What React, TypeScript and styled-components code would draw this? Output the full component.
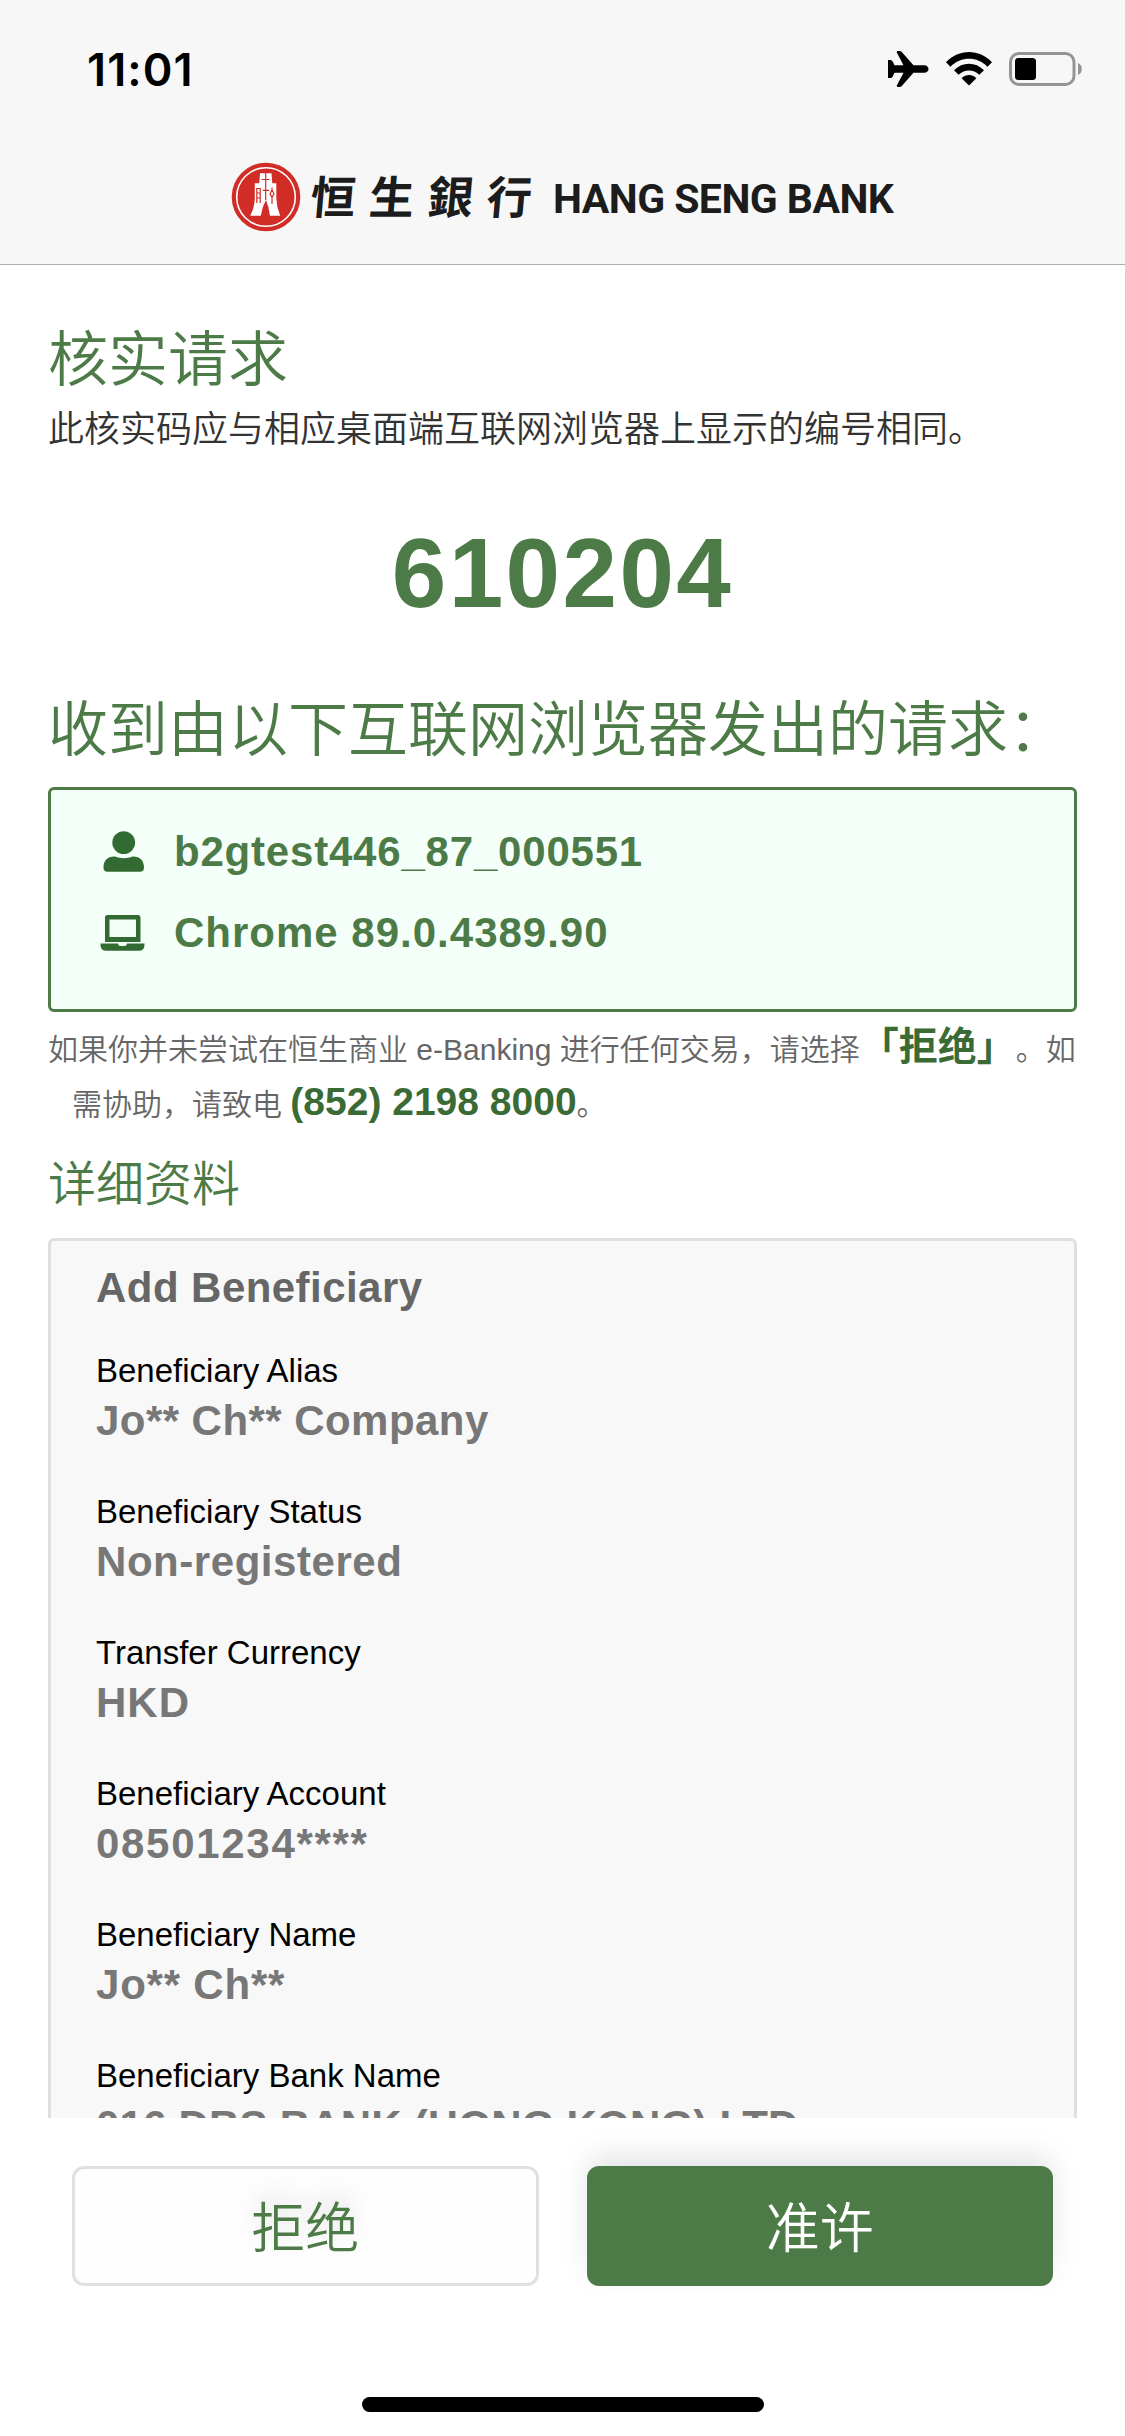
import React from "react";
import styled, { createGlobalStyle } from "styled-components";

const GREEN = "#4d7b47";
const latin = `"Liberation Sans", "Noto Sans CJK SC", sans-serif`;
const cjk = `"Noto Sans CJK SC", "Liberation Sans", sans-serif`;

const GlobalStyle = createGlobalStyle`
  *, *::before, *::after { box-sizing: border-box; }
  body { margin: 0; background: #fff; }
`;

const Screen = styled.div`
  width: 1125px;
  height: 2436px;
  display: flex;
  flex-direction: column;
  overflow: hidden;
  background: #fff;
  font-family: ${latin};
`;

const Header = styled.header`
  flex: none;
  height: 265px;
  display: flex;
  flex-direction: column;
  background: #f7f7f7;
  border-bottom: 1px solid #adadad;
`;

const StatusBar = styled.div`
  height: 132px;
  padding: 6px 42px 0 87px;
  display: flex;
  align-items: center;
  justify-content: space-between;
`;

const Clock = styled.span`
  font: 600 45px/1 Inter, sans-serif;
  letter-spacing: 1.1px;
  color: #000;
`;

const StatusIcons = styled.div`
  display: flex;
  align-items: center;
`;

const Brand = styled.div`
  height: 130px;
  padding-left: 231px;
  display: flex;
  align-items: center;
`;

const BrandHan = styled.span`
  margin: 0 0 5px 10px;
  width: 242px;
  font: 700 45px/62px "Noto Sans CJK TC", sans-serif;
  letter-spacing: 13.7px;
  color: #1c1c1c;
  white-space: nowrap;
  transform: skewX(-5deg);
`;

const BrandLatin = styled.span`
  margin-top: 5px;
  font: 700 41px/69px Roboto, sans-serif;
  letter-spacing: -0.55px;
  color: #1c1c1c;
  white-space: nowrap;
`;

const Main = styled.main`
  flex: none;
  height: 1853px;
  overflow: hidden;
  padding: 0 48px;
`;

const Title = styled.h1<{ $top: number; $size?: number }>`
  margin: ${(p) => p.$top}px 0 0;
  font: 350 ${(p) => p.$size ?? 60}px/72px ${cjk};
  color: ${GREEN};
  white-space: nowrap;
`;

const Intro = styled.p`
  margin: 11px 0 0;
  font: 350 36px/48px ${cjk};
  color: #333;
  white-space: nowrap;
`;

const Code = styled.div`
  margin-top: 73px;
  font: 700 98px/100px ${latin};
  letter-spacing: 2.4px;
  text-align: center;
  color: ${GREEN};
`;

const DeviceCard = styled.section`
  margin-top: 26px;
  height: 225px;
  padding: 21px 49px;
  border: 3px solid ${GREEN};
  border-radius: 6px;
  background: #f5fff9;
`;

const DeviceRow = styled.div`
  height: 81px;
  display: flex;
  align-items: center;
  gap: 29px;
`;

const Strong = styled.span<{ $color: string; $track?: number }>`
  font: 700 42px/50px ${latin};
  letter-spacing: ${(p) => p.$track ?? 1}px;
  color: ${(p) => p.$color};
  white-space: nowrap;
`;

const Notice = styled.div`
  margin-top: 10px;
`;

const NoticeLine = styled.p<{ $indent?: number }>`
  margin: 0;
  padding-left: ${(p) => p.$indent ?? 0}px;
  height: 55px;
  font: 350 30px/55px ${latin};
  text-spacing-trim: space-all;
  color: #666;
  white-space: nowrap;
`;

const Emphasis = styled.b`
  font-size: 39px;
  font-weight: 700;
  line-height: 1;
  color: #3b6b35;
`;

const Details = styled.section`
  margin-top: 22px;
  padding: 22px 45px 0;
  height: 1100px;
  border: 3px solid #dfdfdf;
  border-radius: 6px;
  background: #f8f8f8;
`;

const Fields = styled.dl`
  margin: 36px 0 0;
`;

const Field = styled.div`
  height: 141px;
`;

const Label = styled.dt`
  font: 400 33px/44px ${latin};
  color: #000;
`;

const Value = styled.dd`
  margin: 3px 0 0;
  line-height: 50px;
`;

const Footer = styled.footer`
  flex: 1;
  display: flex;
  flex-direction: column;
  align-items: center;
  padding-top: 48px;
`;

const Actions = styled.div`
  width: 981px;
  display: grid;
  grid-template-columns: 1fr 1fr;
  gap: 48px;
`;

const ActionButton = styled.button<{ $primary?: boolean }>`
  height: 120px;
  padding: 0 0 2px;
  border: ${(p) => (p.$primary ? "0" : "3px solid #e0e0e0")};
  border-radius: 12px;
  background: ${(p) => (p.$primary ? GREEN : "#fefefe")};
  color: ${(p) => (p.$primary ? "#fff" : GREEN)};
  box-shadow: ${(p) => (p.$primary ? "0 -12px 30px -3px rgba(0, 0, 0, 0.12)" : "none")};
  text-shadow: ${(p) => (p.$primary ? "none" : "0 -12px 24px rgba(0, 0, 0, 0.12)")};
  font: 350 54px/72px ${cjk};
`;

const HomeIndicator = styled.div`
  margin-top: 111px;
  width: 402px;
  height: 15px;
  border-radius: 8px;
  background: #000;
`;

const StatusIcon = styled.svg`
  margin-right: 17px;
`;

const Plane = () => (
  <StatusIcon width="41" height="36" viewBox="0 0 41 36">
    <path d="M0 9h2.500q1.500 0 2.200 1.500L6.500 14.300 15.500 14.300 8.800 1.500Q8.500 0 10 0h1.500q1.500 0 2.500 1.300L25.500 14.200H36c6 0 6 7.600 0 7.600H25.500L14 34.700Q13 36 11.500 36H10q-1.500 0-1.200-1.500L15.500 21.700 6.500 21.700 4.700 25.500Q4 27 2.500 27H0z" />
  </StatusIcon>
);

const Wifi = () => (
  <StatusIcon width="46" height="34" viewBox="0 0 46 34">
    <path d="M0 10.200C13-3.400 33-3.400 46 10.200L41.500 14.700C31 4.200 15 4.200 4.500 14.700z" />
    <path d="M8 18.200C16.500 9.600 29.500 9.600 38 18.200L33.400 22.800C27.500 17 18.500 17 12.600 22.800z" />
    <path d="M15.600 26.200C20 22 26 22 30.400 26.200L23 33.600z" />
  </StatusIcon>
);

const Battery = () => (
  <svg width="74" height="34" viewBox="0 0 74 34">
    <rect x="1.500" y="1.500" width="63.500" height="31" rx="8.500" fill="none" stroke="#949494" strokeWidth="3" />
    <rect x="6" y="6" width="21" height="22" rx="3.500" />
    <path d="M69 11c5 1.500 5 10.500 0 12z" fill="#949494" />
  </svg>
);

const Emblem = () => (
  <svg width="70" height="70" viewBox="0 0 70 70">
    <circle cx="35" cy="35" r="34.300" fill="#d12d26" />
    <circle cx="35" cy="35" r="29.300" fill="none" stroke="#fff" strokeWidth="1.600" />
    <path fill="#fff" d="M29 11.300H40.500L41.300 21.300H45.300V36Q45.500 45 49.200 53.800H39Q38 45 35 38Q31 45 29.800 53.800H19.200Q23.800 45 23.800 36V21.300H28.300z" />
    <path
      fill="none"
      stroke="#d12d26"
      strokeWidth="1.200"
      d="M34.700 11v27M30.500 17.500h8M31.800 28.300h6.500M25.800 41V26.500h3.400V41M25.800 31h3.400M25.800 36h3.400M41 25.500v2.500l-2 3.700 2 3.700 2-3.700-2-3.700M41 35.400V42"
    />
  </svg>
);

const UserIcon = () => (
  <svg width="45" height="41" viewBox="0 0 45 41" fill="#316b31">
    <circle cx="23.700" cy="11.600" r="11.400" />
    <path d="M15 25.500c5.500 2.200 12 2.200 17.500 0C40 25.200 44 29.500 44 36.500c0 3-1.400 4.300-4 4.300H7.500c-2.600 0-4-1.300-4-4.300C3.500 29.500 7.500 25.200 15 25.500z" />
  </svg>
);

const LaptopIcon = () => (
  <svg width="45" height="36" viewBox="0 0 45 36" fill="#316b31">
    <path fillRule="evenodd" d="M7.500 0h30.500q2.500 0 2.500 2.500V27H5V2.500Q5 0 7.500 0zM9.500 4.500v17.500h26.500V4.500z" />
    <path d="M.5 28.500h17.500q.3 2.500 2.500 2.500h4q2.200 0 2.500-2.500H44.500q.3 7-5 7.200H5.500Q.2 35.500.5 28.500z" />
  </svg>
);

const fields: { label: string; value: string; track: number }[] = [
  { label: "Beneficiary Alias", value: "Jo** Ch** Company", track: 0.45 },
  { label: "Beneficiary Status", value: "Non-registered", track: 0.55 },
  { label: "Transfer Currency", value: "HKD", track: 1 },
  { label: "Beneficiary Account", value: "08501234****", track: 1.7 },
  { label: "Beneficiary Name", value: "Jo** Ch**", track: 0.8 },
  { label: "Beneficiary Bank Name", value: "016 DBS BANK (HONG KONG) LTD", track: 0.2 },
];

export default function App() {
  return (
    <Screen>
      <GlobalStyle />
      <Header>
        <StatusBar>
          <Clock>11:01</Clock>
          <StatusIcons>
            <Plane />
            <Wifi />
            <Battery />
          </StatusIcons>
        </StatusBar>
        <Brand>
          <Emblem />
          <BrandHan>恒生銀行</BrandHan>
          <BrandLatin>HANG SENG BANK</BrandLatin>
        </Brand>
      </Header>
      <Main>
        <Title $top={54}>核实请求</Title>
        <Intro>此核实码应与相应桌面端互联网浏览器上显示的编号相同。</Intro>
        <Code>610204</Code>
        <Title $top={66}>收到由以下互联网浏览器发出的请求：</Title>
        <DeviceCard>
          <DeviceRow>
            <UserIcon />
            <Strong $color={GREEN} $track={0.8}>b2gtest446_87_000551</Strong>
          </DeviceRow>
          <DeviceRow>
            <LaptopIcon />
            <Strong $color={GREEN}>Chrome 89.0.4389.90</Strong>
          </DeviceRow>
        </DeviceCard>
        <Notice>
          <NoticeLine>
            如果你并未尝试在恒生商业 e-Banking 进行任何交易，请选择<Emphasis>「拒绝」</Emphasis>。如
          </NoticeLine>
          <NoticeLine $indent={24}>
            需协助，请致电 <Emphasis>(852) 2198 8000</Emphasis>。
          </NoticeLine>
        </Notice>
        <Title $top={12} $size={48}>
          详细资料
        </Title>
        <Details>
          <Strong $color="#666" $track={0.45}>Add Beneficiary</Strong>
          <Fields>
            {fields.map((f) => (
              <Field key={f.label}>
                <Label>{f.label}</Label>
                <Value>
                  <Strong $color="#777" $track={f.track}>
                    {f.value}
                  </Strong>
                </Value>
              </Field>
            ))}
          </Fields>
        </Details>
      </Main>
      <Footer>
        <Actions>
          <ActionButton>拒绝</ActionButton>
          <ActionButton $primary>准许</ActionButton>
        </Actions>
        <HomeIndicator />
      </Footer>
    </Screen>
  );
}
